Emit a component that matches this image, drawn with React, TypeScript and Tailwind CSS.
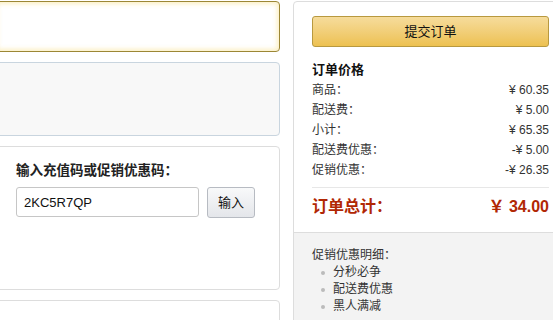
const cjk = "font-['Liberation_Sans','Noto_Sans_CJK_SC',sans-serif]";

const rows = [
  { label: "商品：", value: "¥ 60.35" },
  { label: "配送费：", value: "¥ 5.00" },
  { label: "小计：", value: "¥ 65.35" },
  { label: "配送费优惠：", value: "-¥ 5.00" },
  { label: "促销优惠：", value: "-¥ 26.35" },
];

const promos = ["分秒必争", "配送费优惠", "黑人满减"];

function App() {
  return (
    <div className={`w-[553px] h-[320px] overflow-hidden bg-white ${cjk}`}>
      <div className="flex gap-[13px] pt-px">
        {/* left column */}
        <div className="-ml-[5px] w-[285px] shrink-0 flex flex-col gap-[10px]">
          <div className="h-[51px] rounded-[4px] border border-[#9c8735] bg-white shadow-[inset_0_0_4px_2px_rgba(250,225,140,0.5)]"></div>
          <div className="h-[74px] rounded-[4px] border border-[#c9d5df] bg-[#f8f8f8]"></div>
          <div className="h-[144px] rounded-[4px] border border-[#dddddd] bg-white px-5 pt-[15px]">
            <div className="text-[13.5px] leading-[18px] font-bold text-[#222]">输入充值码或促销优惠码：</div>
            <div className="mt-[7px] flex gap-2">
              <input
                className="w-[183px] h-[30px] rounded-[3px] border border-[#c6c6c6] px-[7px] text-[13px] text-[#111] outline-none"
                defaultValue="2KC5R7QP"
              />
              <button className="w-[48px] h-[31px] rounded-[3px] border border-[#b7bbc2] bg-gradient-to-b from-[#f8f9fa] to-[#e4e6ea] text-[13px] text-[#111]">
                输入
              </button>
            </div>
          </div>
          <div className="h-[60px] rounded-[4px] border border-[#dddddd] bg-white"></div>
        </div>

        {/* right column */}
        <div className="w-[275px] shrink-0 rounded-tl-[4px] border border-[#dddddd] bg-white">
          <div className="px-[18px] pt-[14px] pb-[14px]">
            <button className="w-full h-[31px] rounded-[3px] border border-[#b8993f] bg-gradient-to-b from-[#f6dc9b] to-[#edc150] text-[13px] text-[#111]">
              提交订单
            </button>
            <div className="mt-[13px] text-[13px] leading-[20px] font-bold text-[#111]">订单价格</div>
            {rows.map((r) => (
              <div key={r.label} className="flex justify-between text-[12px] leading-[20px] text-[#333]">
                <span>{r.label}</span>
                <span>{r.value}</span>
              </div>
            ))}
            <div className="mt-[7px] border-t border-[#e7e7e7] pt-[8px] flex justify-between text-[16px] leading-[22px] font-bold text-[#b12704]">
              <span>订单总计：</span>
              <span>￥ 34.00</span>
            </div>
          </div>
          <div className="border-t border-[#dddddd] bg-[#f3f3f3] px-[18px] pt-[14px] pb-4 text-[12px] leading-[17px] text-[#333]">
            <div>促销优惠明细：</div>
            {promos.map((p) => (
              <div key={p} className="flex items-center">
                <span className="ml-[9px] mr-[8px] w-[4px] h-[4px] rounded-full bg-[#bbbbbb]"></span>
                <span>{p}</span>
              </div>
            ))}
          </div>
        </div>
      </div>
    </div>
  );
}

export default App;
